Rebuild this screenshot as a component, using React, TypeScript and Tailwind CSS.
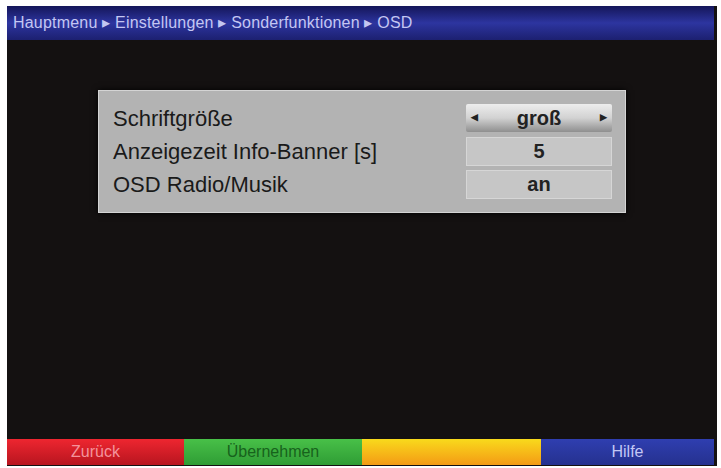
export default function App() {
  const rows = [
    { label: "Schriftgröße", value: "groß", selected: true },
    { label: "Anzeigezeit Info-Banner [s]", value: "5", selected: false },
    { label: "OSD Radio/Musik", value: "an", selected: false },
  ];

  return (
    <div
      className="w-[721px] h-[468px] bg-white pl-[7px] pt-[6px] pr-[4px] pb-[2px]"
      style={{ fontFamily: '"Liberation Sans", Arial, sans-serif' }}
    >
      <div className="flex h-full flex-col bg-[#141111] pr-[3px]">
        {/* Breadcrumb header */}
        <div className="flex h-[34px] items-center bg-gradient-to-b from-[#15165a] via-[#2d35a0] to-[#1c2070] px-[6px] text-[16px] tracking-[0.2px] text-[#c4c6f2]">
          Hauptmenu ▸ Einstellungen ▸ Sonderfunktionen ▸ OSD
        </div>

        {/* Settings panel */}
        <div className="flex-1 pt-[50px] pl-[91px]">
          <div className="flex w-[528px] flex-col gap-[5px] border border-[#d4d4d4] bg-[#b3b3b3] pt-[13px] pb-[14px] pl-[14px] pr-[13px] shadow-[0_0_6px_#000]">
            {rows.map((r) => (
              <div key={r.label} className="flex h-[28px] items-center justify-between">
                <span className="text-[22px] text-[#1a1a1a]">{r.label}</span>
                {r.selected ? (
                  <div className="relative flex h-[28px] w-[146px] items-center justify-center rounded-[2px] bg-gradient-to-b from-[#ededed] via-[#d2d2d2] to-[#8f8f8f] text-[20px] font-bold text-[#222]">
                    <span className="absolute left-[5px] text-[9px] text-[#222]">◀</span>
                    groß
                    <span className="absolute right-[5px] text-[9px] text-[#222]">▶</span>
                  </div>
                ) : (
                  <div className="flex h-[29px] w-[146px] items-center justify-center border border-[#d6d6d6] bg-[#c6c6c6] text-[20px] font-bold text-[#222]">
                    {r.value}
                  </div>
                )}
              </div>
            ))}
          </div>
        </div>

        {/* Color key bar */}
        <div className="mb-[1px] flex h-[26px] text-[16px]">
          <div className="flex w-[177px] items-center justify-center bg-gradient-to-b from-[#ee2630] to-[#b8151f] text-[#f4939c]">
            Zurück
          </div>
          <div className="flex w-[178px] items-center justify-center bg-gradient-to-b from-[#48c048] to-[#2f9d35] text-[#17621c]">
            Übernehmen
          </div>
          <div className="flex w-[179px] items-center justify-center bg-gradient-to-b from-[#f8da1c] to-[#f39a15]" />
          <div className="flex flex-1 items-center justify-center bg-gradient-to-b from-[#2f3eb0] to-[#25318f] text-[#c3c7f5]">
            Hilfe
          </div>
        </div>
      </div>
    </div>
  );
}
